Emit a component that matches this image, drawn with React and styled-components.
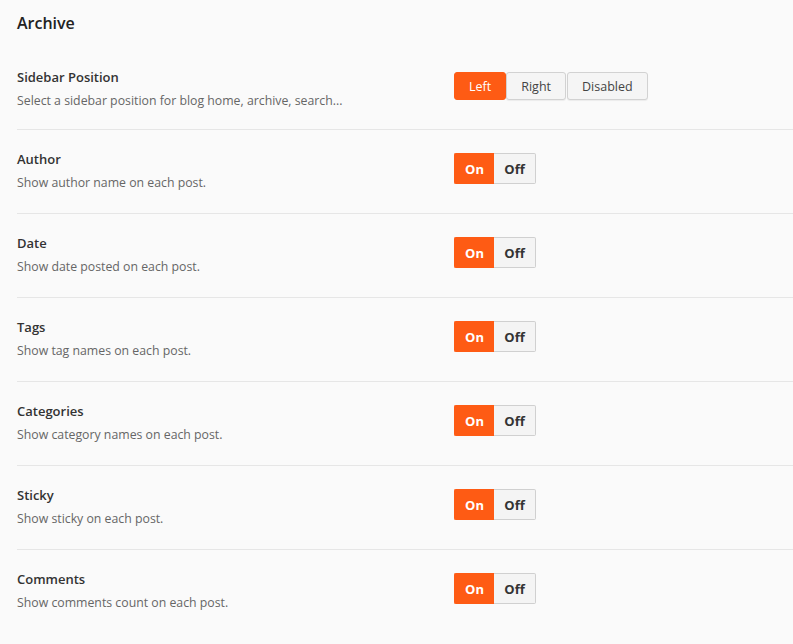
import React, { useState } from "react";
import styled, { createGlobalStyle } from "styled-components";

const GlobalStyle = createGlobalStyle`
  html, body {
    margin: 0;
    padding: 0;
    background: #fafafa;
  }
  body {
    font-family: "Open Sans", "Noto Sans", "Liberation Sans", sans-serif;
    color: #333;
  }
`;

const ORANGE = "#fe5b14";

const settings = [
  { key: "author", title: "Author", desc: "Show author name on each post." },
  { key: "date", title: "Date", desc: "Show date posted on each post." },
  { key: "tags", title: "Tags", desc: "Show tag names on each post." },
  { key: "categories", title: "Categories", desc: "Show category names on each post." },
  { key: "sticky", title: "Sticky", desc: "Show sticky on each post." },
  { key: "comments", title: "Comments", desc: "Show comments count on each post." },
];

export default function App() {
  const [sidebar, setSidebar] = useState("Left");
  const [values, setValues] = useState(
    settings.reduce((acc, s) => ({ ...acc, [s.key]: true }), {})
  );

  const setValue = (key, val) => setValues({ ...values, [key]: val });

  return (
    <Page>
      <GlobalStyle />
      <Heading>Archive</Heading>

      <Row $tight>
        <Info>
          <Label>Sidebar Position</Label>
          <Desc>Select a sidebar position for blog home, archive, search...</Desc>
        </Info>
        <Segmented>
          {["Left", "Right", "Disabled"].map((opt) => (
            <SegButton
              key={opt}
              $active={sidebar === opt}
              onClick={() => setSidebar(opt)}
            >
              {opt}
            </SegButton>
          ))}
        </Segmented>
      </Row>

      {settings.map((s, i) => (
        <Row key={s.key} $last={i === settings.length - 1}>
          <Info>
            <Label>{s.title}</Label>
            <Desc>{s.desc}</Desc>
          </Info>
          <Toggle>
            <ToggleHalf $on={values[s.key]} $side="on" onClick={() => setValue(s.key, true)}>
              On
            </ToggleHalf>
            <ToggleHalf $on={!values[s.key]} $side="off" onClick={() => setValue(s.key, false)}>
              Off
            </ToggleHalf>
          </Toggle>
        </Row>
      ))}
    </Page>
  );
}

const Page = styled.main`
  padding: 11px 0 0 17px;
`;

const Heading = styled.h1`
  margin: 0 0 13px;
  font-size: 16px;
  line-height: 24px;
  font-weight: 600;
  color: #222;
`;

const Row = styled.section`
  display: grid;
  grid-template-columns: 437px auto;
  align-items: start;
  padding: 19px 0 ${(p) => (p.$tight ? "18px" : "20px")};
  border-bottom: ${(p) => (p.$last ? "none" : "1px solid #e6e6e6")};
`;

const Info = styled.div`
  display: flex;
  flex-direction: column;
  gap: 4px;
`;

const Label = styled.div`
  font-size: 13px;
  line-height: 20px;
  font-weight: 600;
  color: #333;
`;

const Desc = styled.div`
  font-size: 12.3px;
  line-height: 20px;
  color: #666;
`;

const Segmented = styled.div`
  display: flex;
  gap: 1px;
  margin-top: 5px;
`;

const SegButton = styled.button`
  height: 28px;
  padding: 0 14px;
  font-family: inherit;
  font-size: 12.5px;
  border-radius: 3px;
  cursor: pointer;
  color: ${(p) => (p.$active ? "#fff" : "#444")};
  background: ${(p) => (p.$active ? ORANGE : "#f5f5f5")};
  border: 1px solid ${(p) => (p.$active ? ORANGE : "#d2d2d2")};
  box-shadow: ${(p) => (p.$active ? "none" : "0 1px 1px rgba(0,0,0,0.06)")};
  margin-right: ${(p) => (p.$active ? "-1px" : "0")};
`;

const Toggle = styled.div`
  display: flex;
  margin-top: 4px;
  width: max-content;
`;

const ToggleHalf = styled.button`
  height: 31px;
  width: ${(p) => (p.$side === "on" ? "40px" : "42px")};
  padding: 0;
  font-family: inherit;
  font-size: 13px;
  font-weight: 700;
  cursor: pointer;
  color: ${(p) => (p.$on ? "#fff" : "#333")};
  background: ${(p) => (p.$on ? ORANGE : "#f4f4f4")};
  border: 1px solid ${(p) => (p.$on ? ORANGE : "#d0d0d0")};
  border-radius: ${(p) => (p.$side === "on" ? "2px 0 0 2px" : "0 2px 2px 0")};
  ${(p) => (p.$side === "on" ? "border-right: none;" : "border-left: none;")}
`;
